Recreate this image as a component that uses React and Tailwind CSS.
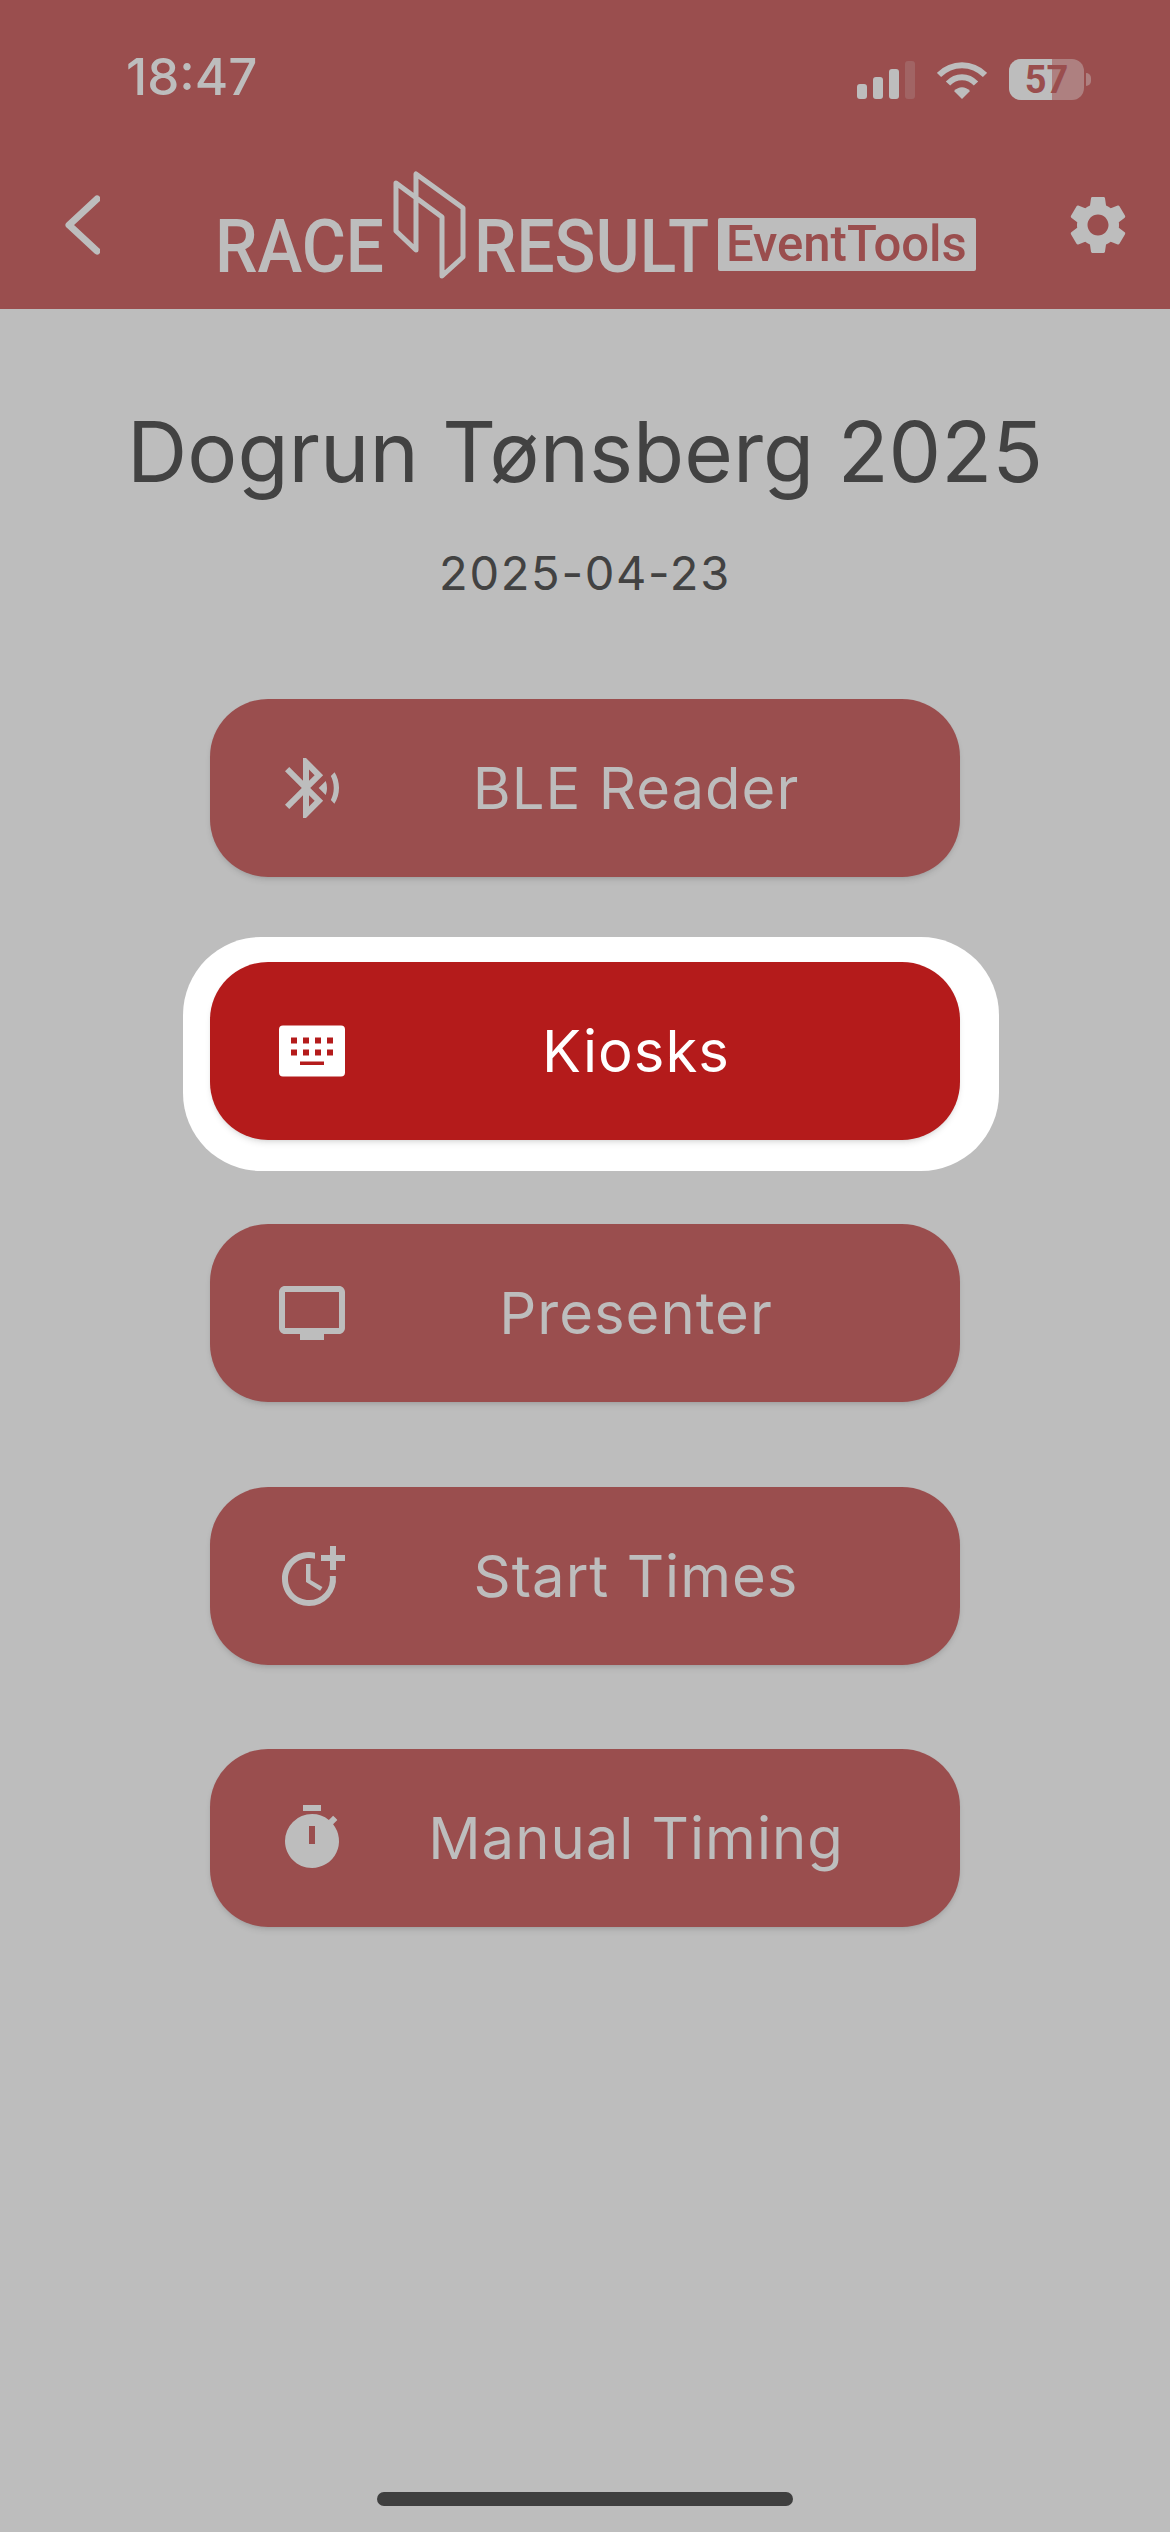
import { MdBluetoothSearching, MdOutlineTv, MdMoreTime, MdTimer, MdSettings } from 'react-icons/md'

// the stock keyboard icon has too many keys, this one has the 4x2 grid from the app
function KeyboardIcon({ size, className }) {
  return (
    <svg width={size} height={size} viewBox="0 0 80 80" className={className}>
      <path
        fillRule="evenodd"
        fill="currentColor"
        d="M11 14.500h58a4 4 0 0 1 4 4v43a4 4 0 0 1-4 4H11a4 4 0 0 1-4-4v-43a4 4 0 0 1 4-4z
           M19 26.500v6h6v-6z M31 26.500v6h6v-6z M43 26.500v6h6v-6z M55 26.500v6h6v-6z
           M19 38.500v6h6v-6z M31 38.500v6h6v-6z M43 38.500v6h6v-6z M55 38.500v6h6v-6z
           M28 50.500v3.500h24v-3.500z"
      />
    </svg>
  )
}

const MENU = [
  { label: 'BLE Reader', Icon: MdBluetoothSearching, iconSize: 72 },
  { label: 'Kiosks', Icon: KeyboardIcon, iconSize: 80, active: true },
  { label: 'Presenter', Icon: MdOutlineTv, iconSize: 72 },
  { label: 'Start Times', Icon: MdMoreTime, iconSize: 72 },
  { label: 'Manual Timing', Icon: MdTimer, iconSize: 72 },
]

function StatusIcons() {
  return (
    <div className="flex items-center gap-[22px]">
      <svg width="58" height="38" viewBox="0 0 58 38">
        <rect x="0" y="23" width="10" height="15" rx="3" fill="#bdbdbd" />
        <rect x="16" y="16" width="10" height="22" rx="3" fill="#bdbdbd" />
        <rect x="32" y="8" width="10" height="30" rx="3" fill="#bdbdbd" />
        <rect x="48" y="0" width="10" height="38" rx="3" fill="#bdbdbd" fillOpacity="0.2" />
      </svg>
      <svg width="50" height="38" viewBox="0 0 50 38">
        <path d="M2 14 C15 1 35 1 48 14" fill="none" stroke="#bdbdbd" strokeWidth="6" />
        <path d="M11 22.500 C19 14 31 14 39 22.500" fill="none" stroke="#bdbdbd" strokeWidth="6" />
        <path d="M17 30 C22 25 28 25 33 30 L25 38 Z" fill="#bdbdbd" />
      </svg>
      <div className="flex items-center gap-[2px]">
        <div className="relative flex h-[41px] w-[75px] overflow-hidden rounded-[12px] bg-[#ae8080]">
          <div className="h-full w-[43px] bg-[#bdbdbd]" />
          <span className="absolute inset-0 flex items-center justify-center font-['Roboto',sans-serif] text-[38px] font-bold leading-none text-[#9a4e4e]">
            57
          </span>
        </div>
        <div className="h-[13px] w-[5px] rounded-r-full bg-[#ae8080]" />
      </div>
    </div>
  )
}

function Logo() {
  return (
    <div className="flex items-end font-['Roboto',sans-serif] text-[#bdbdbd]">
      <div className="mb-[5px] w-[163px]">
        <span className="block origin-left scale-x-[0.9] whitespace-nowrap text-[75px] font-medium leading-[60px]">RACE</span>
      </div>
      <svg className="ml-[15px] mr-[8px]" width="73" height="111" viewBox="393 171 73 111">
        <path d="M396 184 L442 218 V277 L463 258 V209 L416 175 V251 L396 232 Z" fill="none" stroke="#bdbdbd" strokeWidth="5" strokeLinejoin="round" />
      </svg>
      <div className="mb-[5px] w-[230px]">
        <span className="block origin-left scale-x-[0.9] whitespace-nowrap text-[75px] font-medium leading-[60px]">RESULT</span>
      </div>
      <div className="mb-[10px] ml-[14px] flex h-[53px] w-[258px] items-center rounded-[2px] bg-[#bdbdbd] pl-[8px]">
        <span className="block origin-left scale-x-[0.98] whitespace-nowrap text-[50px] font-medium leading-none text-[#9a4e4e]">EventTools</span>
      </div>
    </div>
  )
}

function MenuButton({ label, Icon, iconSize, active }) {
  return (
    <div className="relative">
      {active && <div className="absolute -top-[25px] -bottom-[31px] -left-[27px] -right-[39px] rounded-[78px] bg-white" />}
      <button
        className={`relative flex h-[178px] w-[750px] items-center rounded-[58px] pl-[62px] pr-[40px] shadow-md ${
          active ? 'bg-[#b41b1b] text-white' : 'bg-[#9a4e4e] text-[#bdbdbd]'
        }`}
      >
        <span className="flex w-[80px] shrink-0 justify-center">
          <Icon size={iconSize} />
        </span>
        <span className="flex-1 text-center text-[58px] leading-none tracking-[1px]">{label}</span>
      </button>
    </div>
  )
}

export default function App() {
  return (
    <div className="flex h-[2532px] flex-col bg-[#bdbdbd] font-['Inter',sans-serif]">
      <header className="h-[309px] bg-[#9a4e4e]">
        <div className="flex h-[150px] items-start justify-between pl-[126px] pr-[79px] pt-[52px]">
          <span className="text-[51px] font-medium leading-[50px] text-[#bdbdbd]">18:47</span>
          <div className="pt-[7px]">
            <StatusIcons />
          </div>
        </div>
        <div className="flex h-[150px] items-center pl-[64px] pr-[37px]">
          <svg width="36" height="60" viewBox="0 0 36 60">
            <path d="M33 4 L5 30 L33 56" fill="none" stroke="#bdbdbd" strokeWidth="7" strokeLinecap="round" strokeLinejoin="round" />
          </svg>
          <div className="ml-[115px]">
            <Logo />
          </div>
          <MdSettings size={70} className="ml-auto text-[#bdbdbd]" />
        </div>
      </header>

      <main className="flex flex-1 flex-col items-center">
        <h1 className="mt-[100px] text-[83.500px] font-normal leading-[86px] text-[#424242]">Dogrun Tønsberg 2025</h1>
        <p className="mt-[53px] text-[47px] leading-[50px] tracking-[1.700px] text-[#424242]">2025-04-23</p>
        <div className="mt-[101px] flex flex-col gap-[84.500px]">
          {MENU.map(item => (
            <MenuButton key={item.label} {...item} />
          ))}
        </div>
      </main>

      <div className="flex justify-center pb-[26px]">
        <div className="h-[14px] w-[416px] rounded-full bg-[#3f3f3f]" />
      </div>
    </div>
  )
}
